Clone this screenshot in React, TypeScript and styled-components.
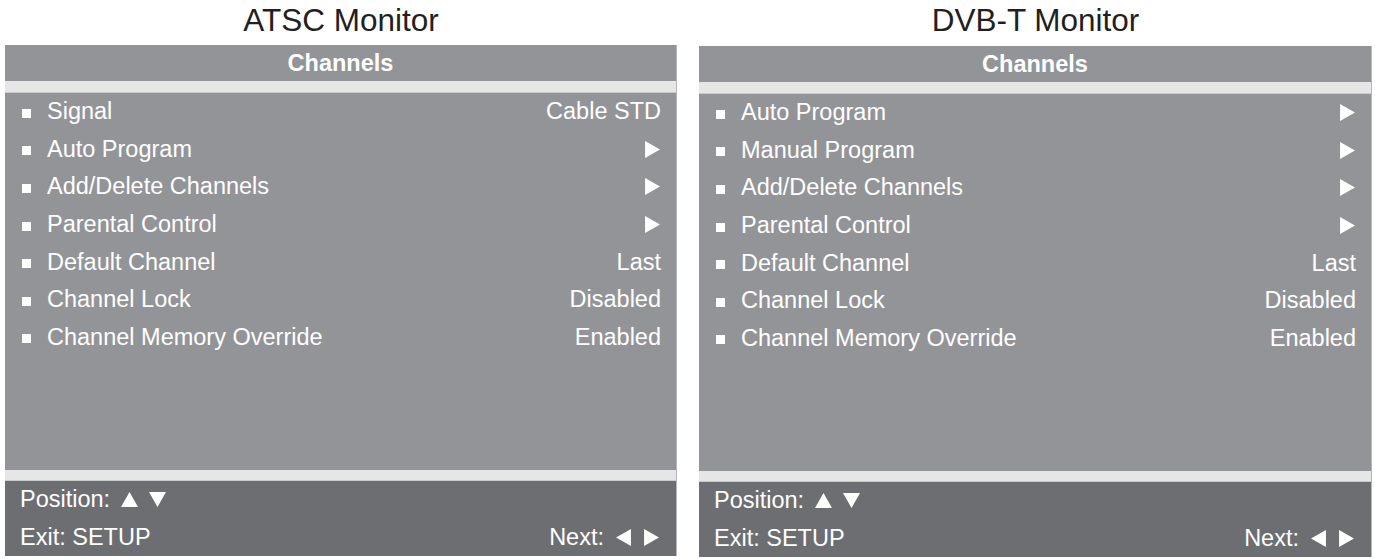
import React from "react";
import styled, { createGlobalStyle } from "styled-components";

const GlobalStyle = createGlobalStyle`
  html, body {
    margin: 0;
    padding: 0;
    background: #ffffff;
    font-family: "Liberation Sans", Arial, sans-serif;
  }
`;

const Page = styled.div`
  display: grid;
  grid-template-columns: 672px 673px;
  column-gap: 22px;
  padding: 0 3px 0 5px;
  width: 1375px;
  height: 559px;
  box-sizing: border-box;
  overflow: hidden;
`;

const Column = styled.div`
  display: flex;
  flex-direction: column;
`;

const Title = styled.h1`
  margin: 0;
  height: 45px;
  line-height: 40px;
  text-align: center;
  font-size: 31.5px;
  font-weight: normal;
  color: #231f20;
`;

const Panel = styled.div<{ $shift: number }>`
  display: flex;
  flex-direction: column;
  margin-top: ${(p) => p.$shift}px;
  background: #939498;
  border-right: 1px solid #b4b5b8;
`;

const Header = styled.div`
  height: 36px;
  line-height: 36px;
  text-align: center;
  font-weight: bold;
  font-size: 23.5px;
  color: #ffffff;
`;

const Strip = styled.div<{ $h: number }>`
  height: ${(p) => p.$h}px;
  background: #e6e6e7;
  border-bottom: 1px solid #c9cacc;
  box-sizing: border-box;
`;

const Body = styled.div`
  height: 377px;
  padding: 0 15px 0 17px;
  display: flex;
  flex-direction: column;
`;

const Row = styled.div`
  height: 37.6px;
  display: flex;
  align-items: center;
  font-size: 23.5px;
  color: #ffffff;
`;

const Bullet = styled.span`
  width: 9px;
  height: 9px;
  background: #ffffff;
  margin: 3px 16px 0 0;
  flex: none;
`;

const Label = styled.span`
  flex: 1;
`;

const Value = styled.span`
  text-align: right;
`;

const Footer = styled.div`
  height: 75px;
  background: #6d6e72;
  padding: 0 16px 0 15px;
  display: grid;
  grid-template-rows: 1fr 1fr;
  color: #ffffff;
  font-size: 23.5px;
`;

const FooterLine = styled.div`
  display: flex;
  align-items: center;
  justify-content: space-between;
`;

const Keys = styled.span`
  display: inline-flex;
  align-items: center;
  gap: 11px;
`;

const Tri = ({ dir, size = 16 }: { dir: "up" | "down" | "left" | "right"; size?: number }) => {
  const pts = {
    up: "8,1 16,15 0,15",
    down: "0,1 16,1 8,15",
    left: "1,8 15,0 15,16",
    right: "1,0 15,8 1,16",
  }[dir];
  return (
    <svg width={size} height={size} viewBox="0 0 16 16" style={{ display: "block" }}>
      <polygon points={pts} fill="#ffffff" />
    </svg>
  );
};

type Item = { label: string; value?: string };

const atsc: Item[] = [
  { label: "Signal", value: "Cable STD" },
  { label: "Auto Program" },
  { label: "Add/Delete Channels" },
  { label: "Parental Control" },
  { label: "Default Channel", value: "Last" },
  { label: "Channel Lock", value: "Disabled" },
  { label: "Channel Memory Override", value: "Enabled" },
];

const dvbt: Item[] = [
  { label: "Auto Program" },
  { label: "Manual Program" },
  { label: "Add/Delete Channels" },
  { label: "Parental Control" },
  { label: "Default Channel", value: "Last" },
  { label: "Channel Lock", value: "Disabled" },
  { label: "Channel Memory Override", value: "Enabled" },
];

const Monitor = ({ title, items, shift }: { title: string; items: Item[]; shift: number }) => (
  <Column>
    <Title>{title}</Title>
    <Panel $shift={shift}>
      <Header>Channels</Header>
      <Strip $h={12} />
      <Body>
        {items.map((it) => (
          <Row key={it.label}>
            <Bullet />
            <Label>{it.label}</Label>
            {it.value ? <Value>{it.value}</Value> : <Tri dir="right" size={17} />}
          </Row>
        ))}
      </Body>
      <Strip $h={11} />
      <Footer>
        <FooterLine>
          <Keys>
            Position:
            <Tri dir="up" size={17} />
            <Tri dir="down" size={17} />
          </Keys>
        </FooterLine>
        <FooterLine>
          <span>Exit: SETUP</span>
          <Keys>
            Next:
            <Tri dir="left" size={17} />
            <Tri dir="right" size={17} />
          </Keys>
        </FooterLine>
      </Footer>
    </Panel>
  </Column>
);

export default function App() {
  return (
    <>
      <GlobalStyle />
      <Page>
        <Monitor title="ATSC Monitor" items={atsc} shift={0} />
        <Monitor title="DVB-T Monitor" items={dvbt} shift={1} />
      </Page>
    </>
  );
}
